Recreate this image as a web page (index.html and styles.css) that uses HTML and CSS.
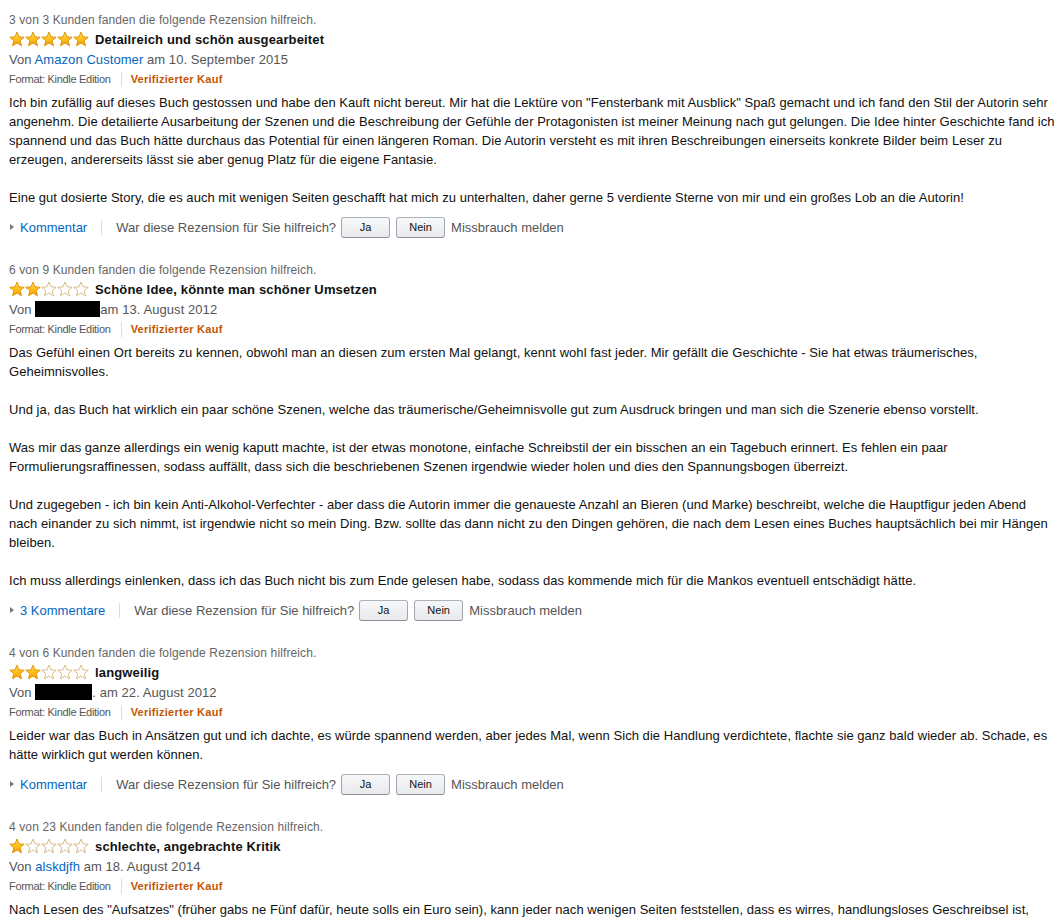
FILE: index.html
```html
<!DOCTYPE html>
<html lang="de">
<head>
<meta charset="utf-8">
<title>Rezensionen</title>
<link rel="stylesheet" href="styles.css">
</head>
<body>
<svg class="defs" width="0" height="0" aria-hidden="true">
  <defs>
    <linearGradient id="gfull" x1="0" y1="0" x2="0" y2="1">
      <stop offset="0" stop-color="#ffdc5a"/>
      <stop offset="0.55" stop-color="#fdbd1b"/>
      <stop offset="1" stop-color="#f59c00"/>
    </linearGradient>
    <symbol id="star-full" viewBox="0 0 16 16">
      <path d="M8 1 L10 5.85 L15.2 6.25 L11.2 9.65 L12.5 14.75 L8 12 L3.5 14.75 L4.8 9.65 L0.8 6.25 L6 5.85Z" fill="url(#gfull)" stroke="#dc8e00" stroke-width="0.9" stroke-linejoin="round"/>
    </symbol>
    <symbol id="star-empty" viewBox="0 0 16 16">
      <path d="M8 1 L10 5.85 L15.2 6.25 L11.2 9.65 L12.5 14.75 L8 12 L3.5 14.75 L4.8 9.65 L0.8 6.25 L6 5.85Z" fill="#fff" stroke="#d2b27a" stroke-width="0.9" stroke-linejoin="round"/>
    </symbol>
  </defs>
</svg>
<div class="page">

  <div class="review">
    <div class="helpful">3 von 3 Kunden fanden die folgende Rezension hilfreich.</div>
    <div class="title-row">
      <span class="stars">
        <svg class="star"><use href="#star-full"/></svg><svg class="star"><use href="#star-full"/></svg><svg class="star"><use href="#star-full"/></svg><svg class="star"><use href="#star-full"/></svg><svg class="star"><use href="#star-full"/></svg>
      </span>
      <span class="title">Detailreich und schön ausgearbeitet</span>
    </div>
    <div class="byline">Von <a href="#">Amazon Customer</a> am 10. September 2015</div>
    <div class="format"><span class="fmt">Format: Kindle Edition</span><span class="sep"></span><span class="verified">Verifizierter Kauf</span></div>
    <div class="text">Ich bin zufällig auf dieses Buch gestossen und habe den Kauft nicht bereut. Mir hat die Lektüre von "Fensterbank mit Ausblick" Spaß gemacht und ich fand den Stil der Autorin sehr angenehm. Die detailierte Ausarbeitung der Szenen und die Beschreibung der Gefühle der Protagonisten ist meiner Meinung nach gut gelungen. Die Idee hinter Geschichte fand ich spannend und das Buch hätte durchaus das Potential für einen längeren Roman. Die Autorin versteht es mit ihren Beschreibungen einerseits konkrete Bilder beim Leser zu erzeugen, andererseits lässt sie aber genug Platz für die eigene Fantasie.<br><br>Eine gut dosierte Story, die es auch mit wenigen Seiten geschafft hat mich zu unterhalten, daher gerne 5 verdiente Sterne von mir und ein großes Lob an die Autorin!</div>
    <div class="actions">
      <span class="tri"></span><a href="#" class="comments">Kommentar</a><span class="vsep"></span><span class="q">War diese Rezension für Sie hilfreich?</span><button class="btn">Ja</button><button class="btn">Nein</button><span class="abuse">Missbrauch melden</span>
    </div>
  </div>

  <div class="review">
    <div class="helpful">6 von 9 Kunden fanden die folgende Rezension hilfreich.</div>
    <div class="title-row">
      <span class="stars">
        <svg class="star"><use href="#star-full"/></svg><svg class="star"><use href="#star-full"/></svg><svg class="star"><use href="#star-empty"/></svg><svg class="star"><use href="#star-empty"/></svg><svg class="star"><use href="#star-empty"/></svg>
      </span>
      <span class="title">Schöne Idee, könnte man schöner Umsetzen</span>
    </div>
    <div class="byline">Von <span class="redact redact-a"></span>am 13. August 2012</div>
    <div class="format"><span class="fmt">Format: Kindle Edition</span><span class="sep"></span><span class="verified">Verifizierter Kauf</span></div>
    <div class="text">Das Gefühl einen Ort bereits zu kennen, obwohl man an diesen zum ersten Mal gelangt, kennt wohl fast jeder. Mir gefällt die Geschichte - Sie hat etwas träumerisches, Geheimnisvolles.<br><br>Und ja, das Buch hat wirklich ein paar schöne Szenen, welche das träumerische/Geheimnisvolle gut zum Ausdruck bringen und man sich die Szenerie ebenso vorstellt.<br><br>Was mir das ganze allerdings ein wenig kaputt machte, ist der etwas monotone, einfache Schreibstil der ein bisschen an ein Tagebuch erinnert. Es fehlen ein paar Formulierungsraffinessen, sodass auffällt, dass sich die beschriebenen Szenen irgendwie wieder holen und dies den Spannungsbogen überreizt.<br><br>Und zugegeben - ich bin kein Anti-Alkohol-Verfechter - aber dass die Autorin immer die genaueste Anzahl an Bieren (und Marke) beschreibt, welche die Hauptfigur jeden Abend nach einander zu sich nimmt, ist irgendwie nicht so mein Ding. Bzw. sollte das dann nicht zu den Dingen gehören, die nach dem Lesen eines Buches hauptsächlich bei mir Hängen bleiben.<br><br>Ich muss allerdings einlenken, dass ich das Buch nicht bis zum Ende gelesen habe, sodass das kommende mich für die Mankos eventuell entschädigt hätte.</div>
    <div class="actions">
      <span class="tri"></span><a href="#" class="comments">3 Kommentare</a><span class="vsep"></span><span class="q">War diese Rezension für Sie hilfreich?</span><button class="btn">Ja</button><button class="btn">Nein</button><span class="abuse">Missbrauch melden</span>
    </div>
  </div>

  <div class="review">
    <div class="helpful">4 von 6 Kunden fanden die folgende Rezension hilfreich.</div>
    <div class="title-row">
      <span class="stars">
        <svg class="star"><use href="#star-full"/></svg><svg class="star"><use href="#star-full"/></svg><svg class="star"><use href="#star-empty"/></svg><svg class="star"><use href="#star-empty"/></svg><svg class="star"><use href="#star-empty"/></svg>
      </span>
      <span class="title">langweilig</span>
    </div>
    <div class="byline">Von <span class="redact redact-b"></span>. am 22. August 2012</div>
    <div class="format"><span class="fmt">Format: Kindle Edition</span><span class="sep"></span><span class="verified">Verifizierter Kauf</span></div>
    <div class="text">Leider war das Buch in Ansätzen gut und ich dachte, es würde spannend werden, aber jedes Mal, wenn Sich die Handlung verdichtete, flachte sie ganz bald wieder ab. Schade, es hätte wirklich gut werden können.</div>
    <div class="actions">
      <span class="tri"></span><a href="#" class="comments">Kommentar</a><span class="vsep"></span><span class="q">War diese Rezension für Sie hilfreich?</span><button class="btn">Ja</button><button class="btn">Nein</button><span class="abuse">Missbrauch melden</span>
    </div>
  </div>

  <div class="review">
    <div class="helpful">4 von 23 Kunden fanden die folgende Rezension hilfreich.</div>
    <div class="title-row">
      <span class="stars">
        <svg class="star"><use href="#star-full"/></svg><svg class="star"><use href="#star-empty"/></svg><svg class="star"><use href="#star-empty"/></svg><svg class="star"><use href="#star-empty"/></svg><svg class="star"><use href="#star-empty"/></svg>
      </span>
      <span class="title">schlechte, angebrachte Kritik</span>
    </div>
    <div class="byline">Von <a href="#">alskdjfh</a> am 18. August 2014</div>
    <div class="format"><span class="fmt">Format: Kindle Edition</span><span class="sep"></span><span class="verified">Verifizierter Kauf</span></div>
    <div class="text">Nach Lesen des "Aufsatzes" (früher gabs ne Fünf dafür, heute solls ein Euro sein), kann jeder nach wenigen Seiten feststellen, dass es wirres, handlungsloses Geschreibsel ist, welches weder Spannung noch eine erkennbare Handlung bietet.</div>
    <div class="actions">
      <span class="tri"></span><a href="#" class="comments">Kommentar</a><span class="vsep"></span><span class="q">War diese Rezension für Sie hilfreich?</span><button class="btn">Ja</button><button class="btn">Nein</button><span class="abuse">Missbrauch melden</span>
    </div>
  </div>

</div>
</body>
</html>
```

FILE: styles.css
```css
* { box-sizing: border-box; }

body {
  margin: 0;
  background: #fff;
  color: #111;
  font-family: Arial, "Liberation Sans", Helvetica, sans-serif;
  font-size: 13px;
}

.defs {
  display: block;
  width: 0;
  height: 0;
  overflow: hidden;
}

.page {
  padding: 10px 7px 0 9px;
}

.review {
  margin-bottom: 22px;
}

.helpful {
  padding-top: 2px;
  font-size: 12px;
  line-height: 17px;
  letter-spacing: 0.12px;
  color: #666;
}

.title-row {
  display: flex;
  align-items: center;
  height: 20px;
  gap: 6px;
}

.stars {
  display: flex;
}

.star {
  width: 16px;
  height: 16px;
  display: block;
}

.title {
  font-weight: bold;
  font-size: 13px;
  letter-spacing: 0.15px;
  color: #111;
}

.byline {
  padding-top: 1px;
  line-height: 19px;
  letter-spacing: 0.07px;
  color: #555;
}

.byline a {
  color: #0066c0;
  text-decoration: none;
}

.redact {
  display: inline-block;
  background: #000;
  height: 16px;
  vertical-align: -3px;
}

.redact-a { width: 65px; }
.redact-b { width: 57px; }

.format {
  display: flex;
  align-items: center;
  padding-top: 1px;
  font-size: 11px;
  line-height: 19px;
  color: #555;
}

.fmt {
  letter-spacing: -0.3px;
}

.sep {
  width: 1px;
  height: 15px;
  background: #ddd;
  margin: 0 9px 0 10px;
}

.verified {
  color: #c45500;
  font-weight: bold;
  letter-spacing: 0.25px;
}

.text {
  margin-top: 4px;
  line-height: 19px;
  letter-spacing: 0.04px;
  color: #111;
}

.actions {
  margin-top: 9px;
  height: 22px;
  display: flex;
  align-items: center;
  color: #555;
}

.tri {
  width: 0;
  height: 0;
  border-top: 3px solid transparent;
  border-bottom: 3px solid transparent;
  border-left: 4px solid #777;
  margin: 0 6px 0 1px;
}

.comments {
  color: #0066c0;
  text-decoration: none;
}

.vsep {
  width: 1px;
  height: 15px;
  background: #ddd;
  margin: 0 14px;
}

.btn {
  width: 49px;
  height: 21px;
  margin: 0 0 0 6px;
  padding: 0;
  border: 1px solid;
  border-color: #adb1b8 #a2a6ac #8d9096;
  border-radius: 3px;
  background: linear-gradient(#f7f8fa, #e7e9ec);
  font-family: Arial, "Liberation Sans", Helvetica, sans-serif;
  font-size: 11px;
  color: #111;
}

.q + .btn {
  margin-left: 5px;
}

.abuse {
  margin-left: 6px;
}
```
